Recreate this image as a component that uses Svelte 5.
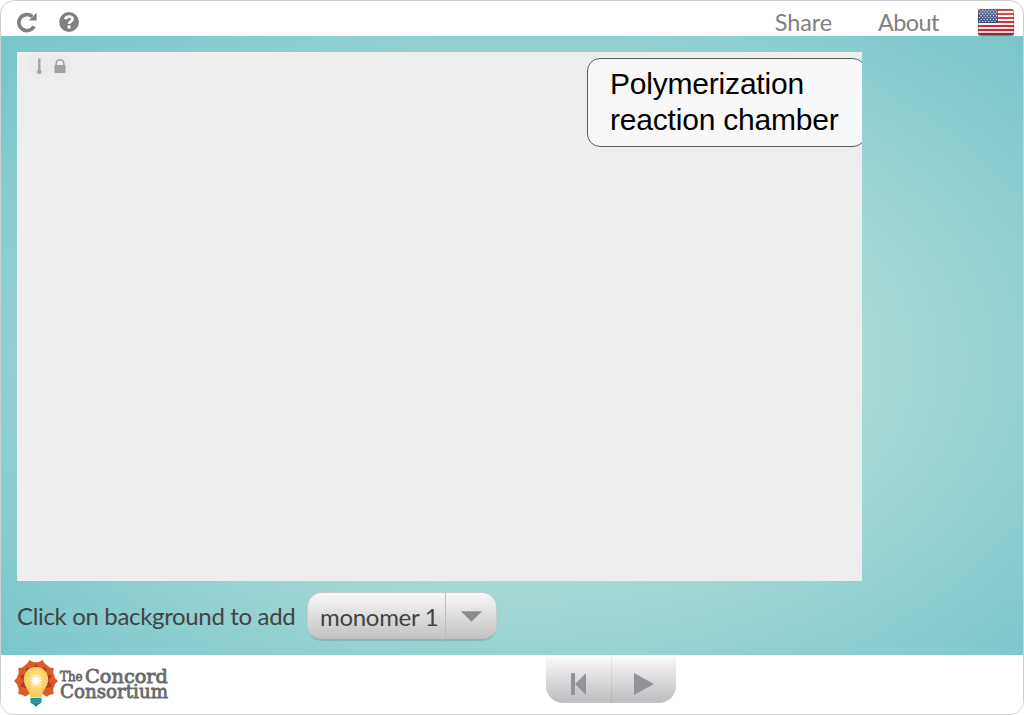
<script>
  const stars = [];
  for (let r = 0; r < 7; r++) {
    for (let c = 0; c < 6; c++) {
      stars.push({ x: 2.6 + c * 3.1 + (r % 2) * 1.5, y: 2 + r * 1.9 });
    }
  }
  const stripes = [0, 1, 2, 3, 4, 5, 6];
  const petals = [-126, -90, -54, -18, 18, 54, 90, 126];
  const folds = [-108, -72, -36, 0, 36, 72, 108];
  const rays = [0, 30, 60, 90, 120, 150];
</script>

<div class="frame">
  <header>
    <button class="icon" aria-label="Reload">
      <svg width="20" height="20" viewBox="0 0 20 20">
        <path d="M15.2 4.6A8 8 0 1 0 17 14.2" fill="none" stroke="#808080" stroke-width="3.6" />
        <path d="M19.6 .8V8.4H11.8Z" fill="#808080" />
      </svg>
    </button>
    <button class="icon help" aria-label="Help">
      <svg width="20" height="20" viewBox="0 0 20 20">
        <circle cx="10" cy="10" r="9.9" fill="#808080" />
        <path d="M6.1 7.2C7 5.2 8.4 4.6 10.1 4.6C12.3 4.6 13.5 5.7 13.5 7.2C13.5 9.5 10 9.2 10 12" fill="none" stroke="#fff" stroke-width="2.7" />
        <rect x="8.5" y="13.4" width="3" height="3" fill="#fff" />
      </svg>
    </button>
    <nav>
      <a class="share">Share</a>
      <a class="about">About</a>
      <svg class="flag" width="38" height="29" viewBox="0 0 38 29">
        <defs>
          <clipPath id="flagclip"><rect x="1" y="1" width="36" height="26" rx="2.5" /></clipPath>
          <linearGradient id="shine" x1="0" y1="0" x2="0" y2="1">
            <stop offset="0" stop-color="#fff" stop-opacity=".25" />
            <stop offset=".55" stop-color="#fff" stop-opacity=".08" />
            <stop offset="1" stop-color="#400" stop-opacity=".2" />
          </linearGradient>
        </defs>
        <rect x="1" y="2" width="36" height="26" rx="2.5" fill="#555" opacity=".7" />
        <g clip-path="url(#flagclip)">
          <rect x="1" y="1" width="36" height="26" fill="#f8f4f4" />
          {#each stripes as s}
            <rect x="1" y={1 + s * 4} width="36" height="2" fill="#c0202f" />
          {/each}
          <rect x="1" y="1" width="20" height="14" fill="#263a72" />
          {#each stars as p}
            <circle cx={p.x} cy={p.y} r=".68" fill="#e8ebf3" />
          {/each}
          <rect x="1" y="1" width="36" height="26" fill="url(#shine)" />
        </g>
        <rect x="1.4" y="1.4" width="35.2" height="25.2" rx="2.3" fill="none" stroke="#653c46" stroke-opacity=".5" stroke-width=".8" />
      </svg>
    </nav>
  </header>

  <main>
    <section class="model">
      <div class="status">
        <span><svg width="24" height="24" viewBox="0 0 24 24"><path d="M12.3 5.5V17" stroke="#a6a6a6" stroke-width="2.4" stroke-linecap="round" /><circle cx="12.3" cy="17.7" r="2.3" fill="#a6a6a6" /></svg></span>
        <span><svg width="24" height="24" viewBox="0 0 24 24"><path d="M8.2 12V9.5a3.8 3.8 0 0 1 7.6 0V12" fill="none" stroke="#a0a0a0" stroke-width="1.6" /><rect x="6.5" y="11" width="11" height="8" fill="#a0a0a0" /></svg></span>
      </div>
      <div class="label">Polymerization<br />reaction chamber</div>
    </section>
    <div class="controls">
      <span class="prompt">Click on background to add</span>
      <div class="select">
        <span class="value">monomer 1</span>
        <span class="arrow"><svg width="21" height="11" viewBox="0 0 21 11"><path d="M0 .3H21L10.5 10.7Z" fill="#8b8b8b" /></svg></span>
      </div>
    </div>
  </main>

  <footer>
    <svg class="logo" width="158" height="55" viewBox="0 0 158 55">
      <defs>
        <radialGradient id="bulb" cx=".5" cy=".42" r=".6">
          <stop offset="0" stop-color="#fff3bd" />
          <stop offset=".35" stop-color="#fddb7c" />
          <stop offset="1" stop-color="#f8c550" />
        </radialGradient>
      </defs>
      <g transform="translate(22 26)">
        {#each petals as a}
          <path transform="rotate({a})" d="M0 -5C-5 -8 -8 -13 -6 -18Q-2.5 -18.5 0 -22Q2.5 -18.5 6 -18C8 -13 5 -8 0 -5Z" fill="#dc5b29" />
        {/each}
        {#each folds as a}
          <path transform="rotate({a})" d="M0 -8L-3.6 -12L0 -17L3.6 -12Z" fill="#ae3c22" />
        {/each}
      </g>
      <path d="M22 12C14.5 12 9.8 17.5 9.8 24.5C9.8 32 16 35 16.2 42.5H27.8C28 35 34.2 32 34.2 24.5C34.2 17.5 29.5 12 22 12Z" fill="url(#bulb)" />
      <g transform="translate(22 25.5)" stroke="#fff" stroke-width="1" opacity=".9">
        {#each rays as a}
          <path transform="rotate({a})" d="M-6 0H6" />
        {/each}
        <circle r="2.7" fill="#fff" />
      </g>
      <path d="M16.5 43H27.5V47.5L25.5 49.3H24.5L22 51.8L19.5 49.3H18.5L16.5 47.5Z" fill="#138796" />
      <path d="M16.5 45.3L27.5 44.5M17 48L27 47.2" stroke="#66b2b9" stroke-width=".7" />
      <g class="brand">
        <text x="46" y="26" font-size="13" textLength="22.5" lengthAdjust="spacingAndGlyphs">The</text>
        <text x="71" y="28" font-size="18.5" textLength="83" lengthAdjust="spacingAndGlyphs">Concord</text>
        <text x="46" y="43.2" font-size="18" textLength="108" lengthAdjust="spacingAndGlyphs">Consortium</text>
      </g>
    </svg>
    <div class="playback">
      <button aria-label="Reset"><svg width="15" height="22" viewBox="0 0 15 22"><path d="M0 0H4V22H0ZM15 0V22L4 11Z" fill="#929497" /></svg></button>
      <button aria-label="Play"><svg width="20" height="22" viewBox="0 0 20 22"><path d="M0 0L20 11L0 22Z" fill="#929497" /></svg></button>
    </div>
  </footer>
</div>

<style>
  :global(body) { margin: 0; background: #fff; overflow: hidden; }
  .frame {
    box-sizing: border-box; width: 1024px; height: 715px;
    display: flex; flex-direction: column;
    border: 1px solid #ccd0d0; border-radius: 14px; overflow: hidden;
    background: #fff; font-family: Lato, sans-serif; font-size: 24px; color: #434343;
  }
  button { border: 0; padding: 0; background: none; display: flex; }
  button svg { overflow: visible; }
  header { height: 35px; flex: none; display: flex; padding-left: 16px; }
  .icon { height: 20px; margin-top: 11px; }
  .help { margin-left: 22px; }
  nav { margin-left: auto; display: flex; padding-right: 8px; color: #808080; }
  nav a { line-height: 30px; margin-top: 6px; font-size: 23.4px; letter-spacing: -.1px; }
  .share { margin-right: 46px; }
  .about { margin-right: 38px; letter-spacing: -.5px; }
  .flag { margin-top: 7px; }
  main {
    height: 619px; flex: none; box-sizing: border-box; padding: 16px 16px 0;
    background: radial-gradient(705px 450px at 530px 324px, #d0ecdf 0, #7ac6cb 100%);
  }
  .model { width: 845px; height: 529px; position: relative; overflow: hidden; background: #eee; }
  .status { display: flex; padding: 2px 0 0 10px; }
  .status span { width: 24px; height: 24px; border-radius: 12px; background: #ebebeb; }
  .status span + span { margin-left: -3px; }
  .status svg { display: block; }
  .label {
    position: absolute; left: 570px; top: 6px; width: 279px; height: 89px; box-sizing: border-box;
    border: 1px solid #5c5c5c; border-radius: 13px; background: #f8f8f8;
    padding: 7px 0 0 22px; font: 30px/36px "Liberation Sans", Arial, sans-serif; letter-spacing: -.2px; color: #000; white-space: nowrap;
  }
  .controls { display: flex; align-items: flex-start; padding-top: 11px; }
  .prompt { width: 290px; line-height: 30px; margin-top: 9px; white-space: nowrap; letter-spacing: -.34px; }
  .select {
    box-sizing: border-box; width: 190px; height: 48px; display: flex;
    border: 1px solid #c8cccc; border-bottom-color: #a2abab; border-radius: 15px;
    background: linear-gradient(#f8f8f8, #c2c2c2); box-shadow: 0 1px 1px rgba(70, 110, 110, .25);
  }
  .value { width: 138px; box-sizing: border-box; padding-left: 12px; line-height: 48px; border-right: 1px solid #bdbdbd; white-space: nowrap; letter-spacing: -.3px; }
  .arrow { flex: 1; display: flex; align-items: center; justify-content: center; }
  footer { flex: 1; display: flex; align-items: flex-start; background: #fff; }
  .logo { margin-left: 13px; }
  .brand { font-family: "DejaVu Serif", serif; fill: #686a6c; stroke: #686a6c; stroke-width: .8; }
  .playback {
    margin-left: 374px; width: 130px; height: 48px; box-sizing: border-box; display: flex; overflow: hidden;
    border-radius: 0 0 17px 17px; background: linear-gradient(#fbfcfc, #bcbdbf);
    border-bottom: 1px solid #c3c4c5;
  }
  .playback button { width: 65px; height: 47px; box-sizing: border-box; padding: 18px 0 0 25px; }
  .playback button + button { padding-left: 22px; border-image: linear-gradient(#eee, #aaacae) 1; border-width: 0 0 0 1px; border-style: solid; }
</style>
